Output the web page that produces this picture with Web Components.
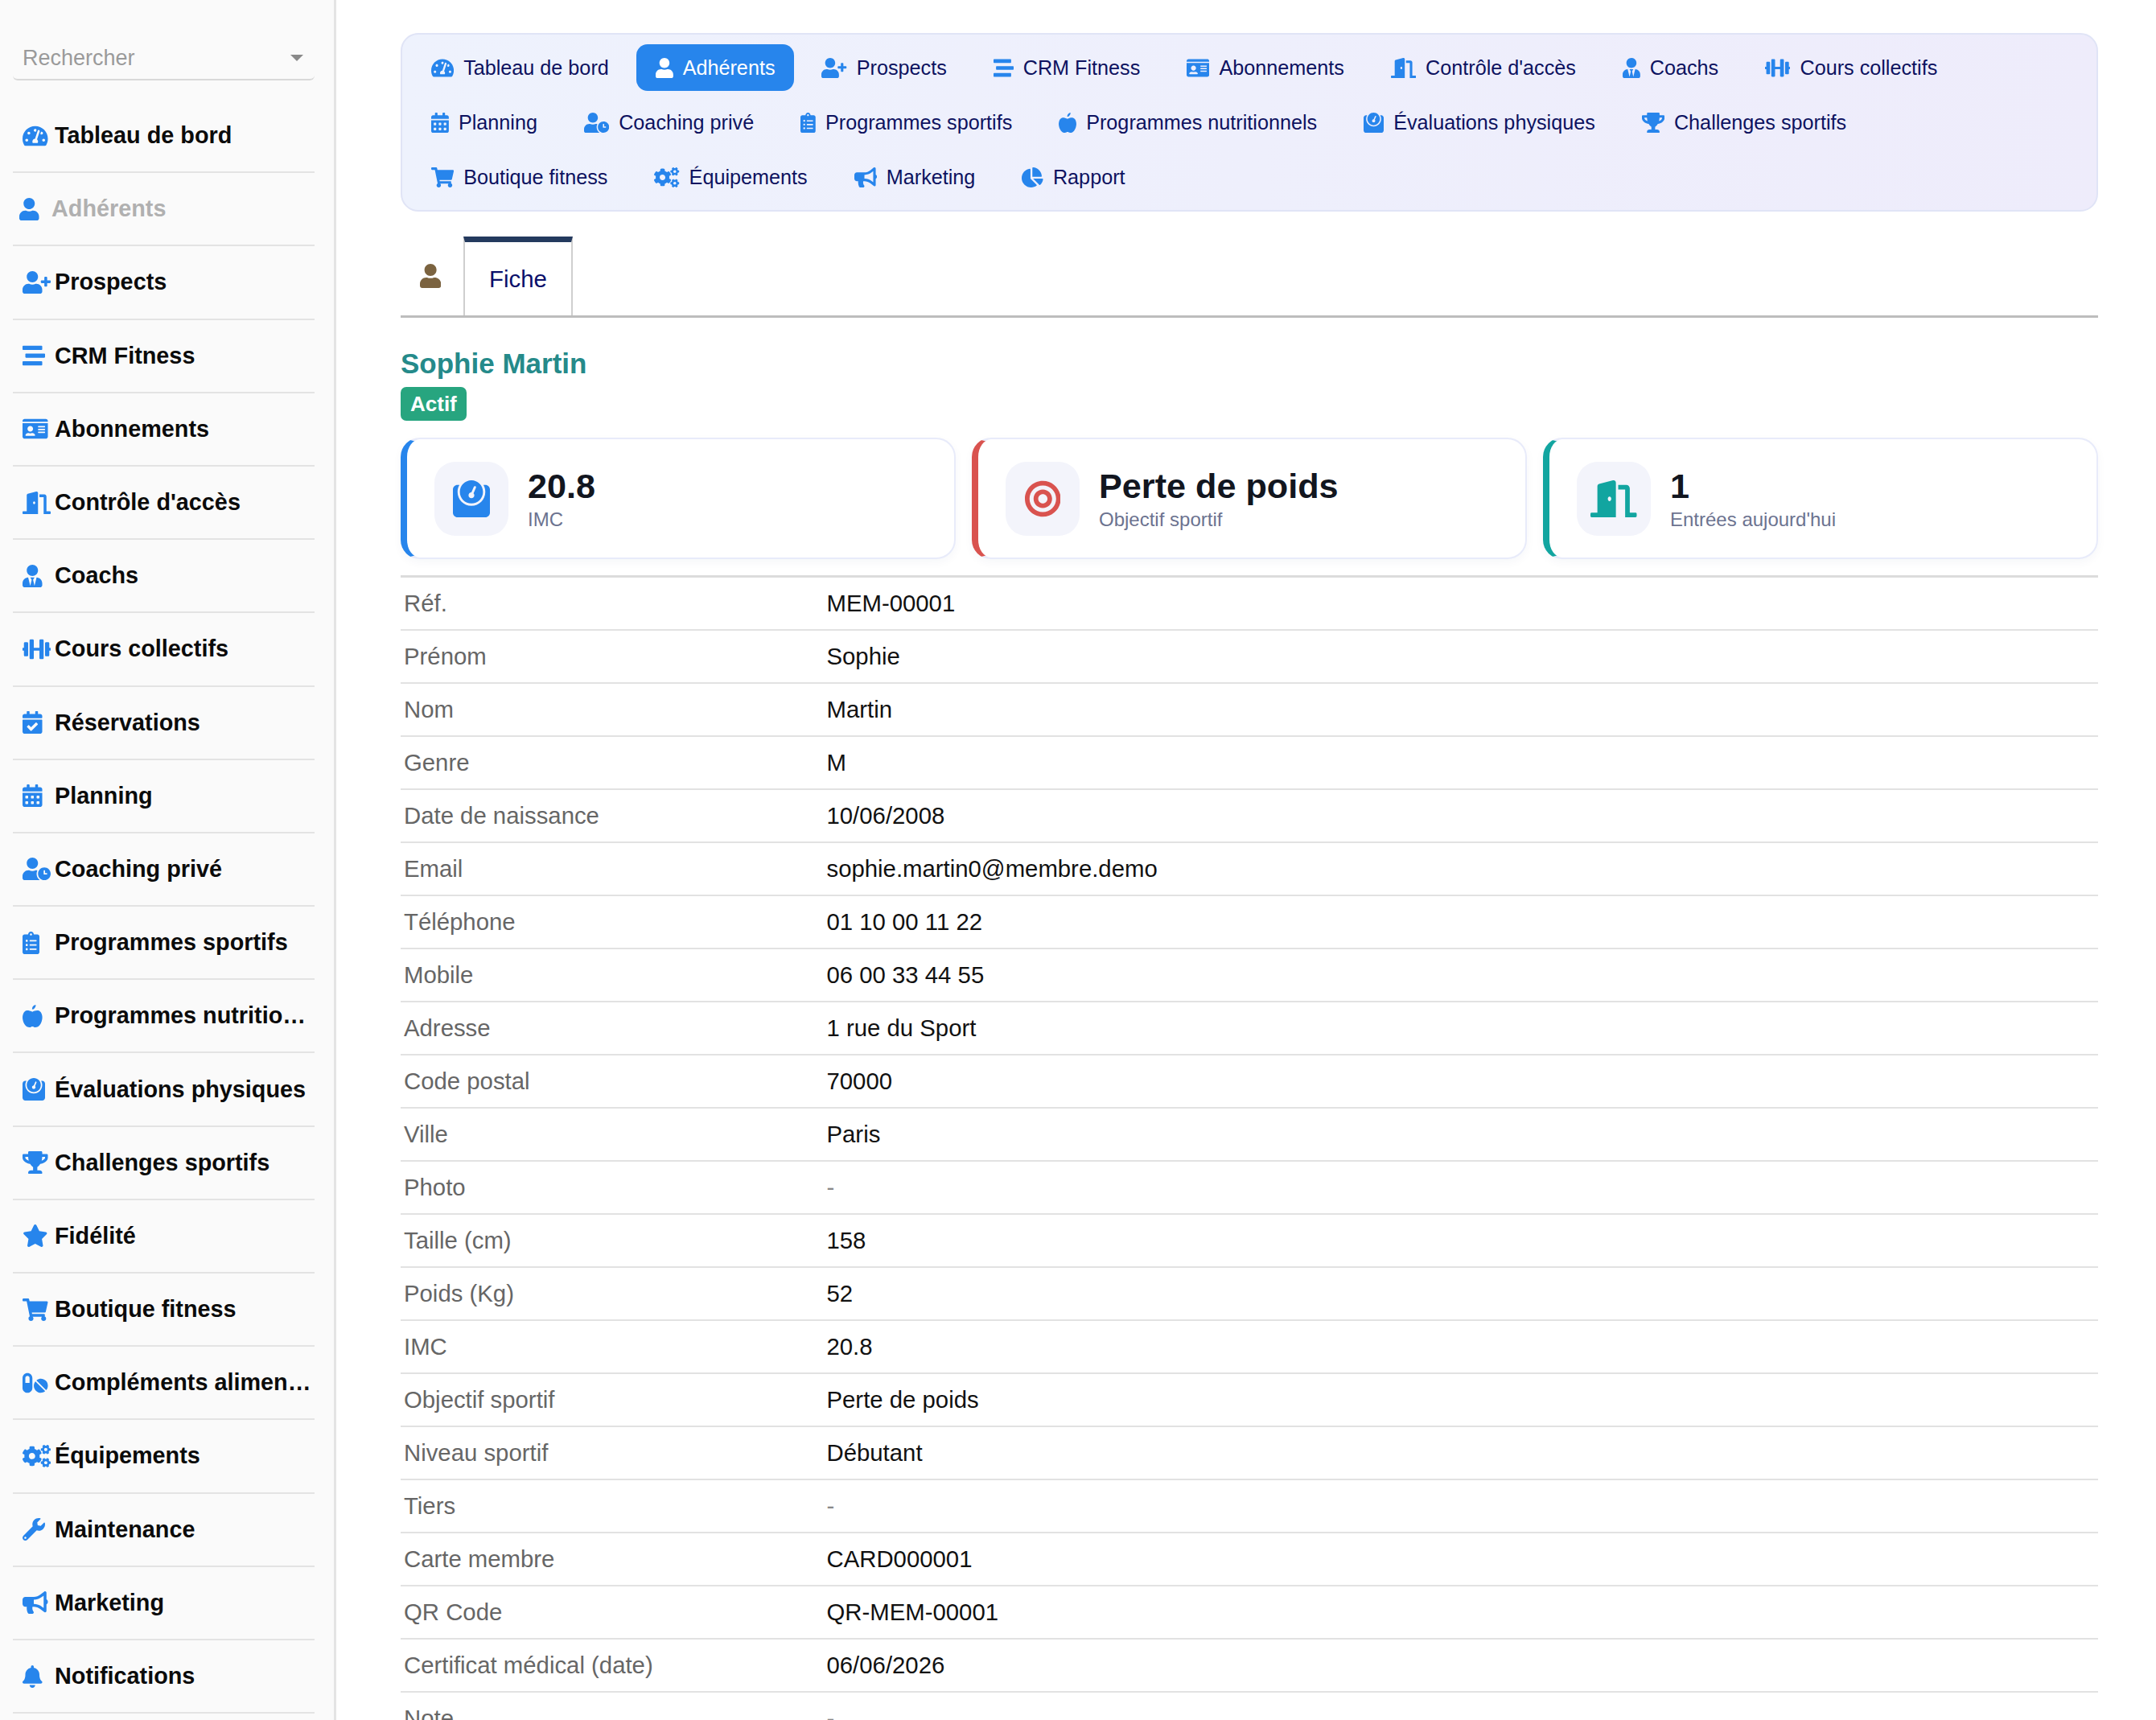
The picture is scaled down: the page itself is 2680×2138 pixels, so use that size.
<!DOCTYPE html>
<html lang="fr">
<head>
<meta charset="utf-8">
<title>Sophie Martin</title>
<style>
	html, body { margin: 0; height: 2138px; overflow: hidden; background: #fff; }
	body { font-family: "Liberation Sans", Arial, sans-serif; display: flex; align-items: flex-start; }
</style>
</head>
<body>
<side-menu>
	<search-select slot="search" placeholder="Rechercher"></search-select>
	<side-item icon="gauge">Tableau de bord</side-item>
	<side-item icon="user" current>Adhérents</side-item>
	<side-item icon="userPlus">Prospects</side-item>
	<side-item icon="stream">CRM Fitness</side-item>
	<side-item icon="idCard">Abonnements</side-item>
	<side-item icon="door">Contrôle d'accès</side-item>
	<side-item icon="userTie">Coachs</side-item>
	<side-item icon="dumbbell">Cours collectifs</side-item>
	<side-item icon="calCheck">Réservations</side-item>
	<side-item icon="calendar">Planning</side-item>
	<side-item icon="userClock">Coaching privé</side-item>
	<side-item icon="clipboard">Programmes sportifs</side-item>
	<side-item icon="apple">Programmes nutritionnels</side-item>
	<side-item icon="weight">Évaluations physiques</side-item>
	<side-item icon="trophy">Challenges sportifs</side-item>
	<side-item icon="star">Fidélité</side-item>
	<side-item icon="cart">Boutique fitness</side-item>
	<side-item icon="pills">Compléments alimentaires</side-item>
	<side-item icon="cogs">Équipements</side-item>
	<side-item icon="wrench">Maintenance</side-item>
	<side-item icon="bullhorn">Marketing</side-item>
	<side-item icon="bell">Notifications</side-item>
</side-menu>

<main-area>
	<nav-panel>
		<nav-pill icon="gauge">Tableau de bord</nav-pill>
		<nav-pill icon="user" active>Adhérents</nav-pill>
		<nav-pill icon="userPlus">Prospects</nav-pill>
		<nav-pill icon="stream">CRM Fitness</nav-pill>
		<nav-pill icon="idCard">Abonnements</nav-pill>
		<nav-pill icon="door">Contrôle d'accès</nav-pill>
		<nav-pill icon="userTie">Coachs</nav-pill>
		<nav-pill icon="dumbbell">Cours collectifs</nav-pill>
		<nav-pill icon="calendar">Planning</nav-pill>
		<nav-pill icon="userClock">Coaching privé</nav-pill>
		<nav-pill icon="clipboard">Programmes sportifs</nav-pill>
		<nav-pill icon="apple">Programmes nutritionnels</nav-pill>
		<nav-pill icon="weight">Évaluations physiques</nav-pill>
		<nav-pill icon="trophy">Challenges sportifs</nav-pill>
		<nav-pill icon="cart">Boutique fitness</nav-pill>
		<nav-pill icon="cogs">Équipements</nav-pill>
		<nav-pill icon="bullhorn">Marketing</nav-pill>
		<nav-pill icon="pie">Rapport</nav-pill>
	</nav-panel>

	<tab-bar label="Fiche"></tab-bar>
	<member-head name="Sophie Martin" status="Actif"></member-head>

	<stat-row>
		<stat-card icon="weight" color="#2785ec" value="20.8">IMC</stat-card>
		<stat-card icon="bullseye" color="#d9534f" value="Perte de poids">Objectif sportif</stat-card>
		<stat-card icon="door" color="#12a5a0" value="1">Entrées aujourd'hui</stat-card>
	</stat-row>

	<detail-table>
		<detail-row label="Réf.">MEM-00001</detail-row>
		<detail-row label="Prénom">Sophie</detail-row>
		<detail-row label="Nom">Martin</detail-row>
		<detail-row label="Genre">M</detail-row>
		<detail-row label="Date de naissance">10/06/2008</detail-row>
		<detail-row label="Email">sophie.martin0@membre.demo</detail-row>
		<detail-row label="Téléphone">01 10 00 11 22</detail-row>
		<detail-row label="Mobile">06 00 33 44 55</detail-row>
		<detail-row label="Adresse">1 rue du Sport</detail-row>
		<detail-row label="Code postal">70000</detail-row>
		<detail-row label="Ville">Paris</detail-row>
		<detail-row label="Photo" empty>-</detail-row>
		<detail-row label="Taille (cm)">158</detail-row>
		<detail-row label="Poids (Kg)">52</detail-row>
		<detail-row label="IMC">20.8</detail-row>
		<detail-row label="Objectif sportif">Perte de poids</detail-row>
		<detail-row label="Niveau sportif">Débutant</detail-row>
		<detail-row label="Tiers" empty>-</detail-row>
		<detail-row label="Carte membre">CARD000001</detail-row>
		<detail-row label="QR Code">QR-MEM-00001</detail-row>
		<detail-row label="Certificat médical (date)">06/06/2026</detail-row>
		<detail-row label="Note" empty>-</detail-row>
	</detail-table>
</main-area>

<script>
// Les icônes : [largeur du viewBox, tracé]
const ICONS = {
	gauge: [576, 'M288 32C128.94 32 0 160.94 0 320c0 52.8 14.25 102.26 39.06 144.8 5.61 9.62 16.3 15.2 27.44 15.2h443c11.14 0 21.83-5.58 27.44-15.2C561.75 422.26 576 372.8 576 320c0-159.06-128.94-288-288-288zm0 64c14.71 0 26.58 10.13 30.32 23.65-1.11 2.26-2.64 4.23-3.45 6.67l-9.22 27.67c-5.13 3.49-10.97 6.01-17.64 6.01-17.67 0-32-14.33-32-32S270.33 96 288 96zM96 384c-17.67 0-32-14.33-32-32s14.33-32 32-32 32 14.33 32 32-14.33 32-32 32zm48-160c-17.67 0-32-14.33-32-32s14.33-32 32-32 32 14.33 32 32-14.33 32-32 32zm246.77-72.41l-61.33 184C343.13 347.33 352 364.54 352 384c0 11.72-3.38 22.55-8.88 32H232.88c-5.5-9.45-8.88-20.28-8.88-32 0-33.94 26.5-61.43 59.9-63.59l61.34-184.01c4.17-12.56 17.73-19.45 30.36-15.17 12.57 4.19 19.35 17.79 15.17 30.36zm14.66 57.2l15.52-46.55c3.47-1.29 7.13-2.23 11.05-2.23 17.67 0 32 14.33 32 32s-14.33 32-32 32c-11.38 0-20.89-6.28-26.57-15.22zM480 384c-17.67 0-32-14.33-32-32s14.33-32 32-32 32 14.33 32 32-14.33 32-32 32z'],
	user: [448, 'M224 256c70.7 0 128-57.3 128-128S294.7 0 224 0 96 57.3 96 128s57.3 128 128 128zm89.6 32h-16.7c-22.2 10.2-46.9 16-72.9 16s-50.6-5.8-72.9-16h-16.7C60.2 288 0 348.2 0 422.4V464c0 26.5 21.5 48 48 48h352c26.5 0 48-21.5 48-48v-41.6c0-74.2-60.2-134.4-134.4-134.4z'],
	userPlus: [640, 'M624 208h-64v-64c0-8.8-7.2-16-16-16h-32c-8.8 0-16 7.2-16 16v64h-64c-8.8 0-16 7.2-16 16v32c0 8.8 7.2 16 16 16h64v64c0 8.8 7.2 16 16 16h32c8.8 0 16-7.2 16-16v-64h64c8.8 0 16-7.2 16-16v-32c0-8.8-7.2-16-16-16zm-400 48c70.7 0 128-57.3 128-128S294.7 0 224 0 96 57.3 96 128s57.3 128 128 128zm89.6 32h-16.7c-22.2 10.2-46.9 16-72.9 16s-50.6-5.8-72.9-16h-16.7C60.2 288 0 348.2 0 422.4V464c0 26.5 21.5 48 48 48h352c26.5 0 48-21.5 48-48v-41.6c0-74.2-60.2-134.4-134.4-134.4z'],
	stream: [512, 'M16 128h416c8.84 0 16-7.16 16-16V48c0-8.84-7.16-16-16-16H16C7.16 32 0 39.16 0 48v64c0 8.84 7.16 16 16 16zm480 80H80c-8.84 0-16 7.16-16 16v64c0 8.84 7.16 16 16 16h416c8.84 0 16-7.16 16-16v-64c0-8.84-7.16-16-16-16zm-64 176H16c-8.84 0-16 7.16-16 16v64c0 8.84 7.16 16 16 16h416c8.84 0 16-7.16 16-16v-64c0-8.84-7.16-16-16-16z'],
	idCard: [576, 'M528 32H48C21.5 32 0 53.5 0 80v16h576V80c0-26.5-21.5-48-48-48zM0 432c0 26.5 21.5 48 48 48h480c26.5 0 48-21.5 48-48V128H0v304zm352-232c0-4.4 3.6-8 8-8h144c4.4 0 8 3.6 8 8v16c0 4.4-3.6 8-8 8H360c-4.4 0-8-3.6-8-8v-16zm0 64c0-4.4 3.6-8 8-8h144c4.4 0 8 3.6 8 8v16c0 4.4-3.6 8-8 8H360c-4.4 0-8-3.6-8-8v-16zm0 64c0-4.4 3.6-8 8-8h144c4.4 0 8 3.6 8 8v16c0 4.4-3.6 8-8 8H360c-4.4 0-8-3.6-8-8v-16zM176 192c35.3 0 64 28.7 64 64s-28.7 64-64 64-64-28.7-64-64 28.7-64 64-64zM67.1 396.2C75.5 370.5 99.6 352 128 352h8.2c12.3 5.1 25.7 8 39.8 8s27.6-2.9 39.8-8h8.2c28.4 0 52.5 18.5 60.9 44.2 3.2 9.9-5.2 19.8-15.6 19.8H82.7c-10.4 0-18.8-10-15.6-19.8z'],
	door: [640, 'M624 448h-80V113.45C544 86.19 522.47 64 496 64H384v64h96v384h144c8.84 0 16-7.16 16-16v-32c0-8.84-7.16-16-16-16zM312.24 1.01l-192 49.74C105.99 54.44 96 67.7 96 82.92V448H16c-8.84 0-16 7.16-16 16v32c0 8.84 7.16 16 16 16h336V33.18c0-21.58-19.56-37.41-39.76-32.17zM264 288c-13.25 0-24-14.33-24-32s10.75-32 24-32 24 14.33 24 32-10.75 32-24 32z'],
	userTie: [448, 'M224 256c70.7 0 128-57.3 128-128S294.7 0 224 0 96 57.3 96 128s57.3 128 128 128zm95.8 32.6L272 480l-32-136 32-56h-96l32 56-32 136-47.8-191.4C56.9 292 0 350.3 0 422.4V464c0 26.5 21.5 48 48 48h352c26.5 0 48-21.5 48-48v-41.6c0-72.1-56.9-130.4-128.2-133.8z'],
	dumbbell: [640, 'M104 96H56c-13.3 0-24 10.7-24 24v104H8c-4.4 0-8 3.6-8 8v48c0 4.4 3.6 8 8 8h24v104c0 13.3 10.7 24 24 24h48c13.3 0 24-10.7 24-24V120c0-13.3-10.7-24-24-24zm528 128h-24V120c0-13.3-10.7-24-24-24h-48c-13.3 0-24 10.7-24 24v272c0 13.3 10.7 24 24 24h48c13.3 0 24-10.7 24-24V288h24c4.4 0 8-3.6 8-8v-48c0-4.4-3.6-8-8-8zM456 32h-48c-13.3 0-24 10.7-24 24v168H256V56c0-13.3-10.7-24-24-24h-48c-13.3 0-24 10.7-24 24v400c0 13.3 10.7 24 24 24h48c13.3 0 24-10.7 24-24V288h128v168c0 13.3 10.7 24 24 24h48c13.3 0 24-10.7 24-24V56c0-13.3-10.7-24-24-24z'],
	calCheck: [448, 'M436 160H12c-6.627 0-12-5.373-12-12v-36c0-26.51 21.49-48 48-48h48V12c0-6.627 5.373-12 12-12h40c6.627 0 12 5.373 12 12v52h128V12c0-6.627 5.373-12 12-12h40c6.627 0 12 5.373 12 12v52h48c26.51 0 48 21.49 48 48v36c0 6.627-5.373 12-12 12zM12 192h424c6.627 0 12 5.373 12 12v260c0 26.51-21.49 48-48 48H48c-26.51 0-48-21.49-48-48V204c0-6.627 5.373-12 12-12zm333.296 95.947l-28.169-28.398c-4.667-4.705-12.265-4.736-16.970-.068L194.12 364.665l-45.98-46.352c-4.667-4.705-12.266-4.736-16.971-.068l-28.397 28.17c-4.705 4.667-4.736 12.265-.068 16.970l82.601 83.269c4.667 4.705 12.265 4.736 16.970.068l142.953-141.805c4.705-4.667 4.736-12.265.068-16.97z'],
	calendar: [448, 'M0 464c0 26.5 21.5 48 48 48h352c26.5 0 48-21.5 48-48V192H0v272zm320-196c0-6.6 5.4-12 12-12h40c6.6 0 12 5.4 12 12v40c0 6.6-5.4 12-12 12h-40c-6.6 0-12-5.4-12-12v-40zm0 128c0-6.6 5.4-12 12-12h40c6.6 0 12 5.4 12 12v40c0 6.6-5.4 12-12 12h-40c-6.6 0-12-5.4-12-12v-40zM192 268c0-6.6 5.4-12 12-12h40c6.6 0 12 5.4 12 12v40c0 6.6-5.4 12-12 12h-40c-6.6 0-12-5.4-12-12v-40zm0 128c0-6.6 5.4-12 12-12h40c6.6 0 12 5.4 12 12v40c0 6.6-5.4 12-12 12h-40c-6.6 0-12-5.4-12-12v-40zM64 268c0-6.6 5.4-12 12-12h40c6.6 0 12 5.4 12 12v40c0 6.6-5.4 12-12 12H76c-6.6 0-12-5.4-12-12v-40zm0 128c0-6.6 5.4-12 12-12h40c6.6 0 12 5.4 12 12v40c0 6.6-5.4 12-12 12H76c-6.6 0-12-5.4-12-12v-40zM400 64h-48V16c0-8.8-7.2-16-16-16h-32c-8.8 0-16 7.2-16 16v48H160V16c0-8.8-7.2-16-16-16h-32c-8.8 0-16 7.2-16 16v48H48C21.5 64 0 85.5 0 112v48h448v-48c0-26.5-21.5-48-48-48z'],
	userClock: [640, 'M496 224c-79.6 0-144 64.4-144 144s64.4 144 144 144 144-64.4 144-144-64.4-144-144-144zm64 150.3c0 5.3-4.4 9.7-9.7 9.7h-60.6c-5.3 0-9.7-4.4-9.7-9.7v-76.6c0-5.3 4.4-9.7 9.7-9.7h12.6c5.3 0 9.7 4.4 9.7 9.7V352h38.3c5.3 0 9.7 4.4 9.7 9.7v12.6zM320 368c0-27.8 6.7-54.1 18.2-77.5-8-1.5-16.2-2.5-24.6-2.5h-16.7c-22.2 10.2-46.9 16-72.9 16s-50.6-5.8-72.9-16h-16.7C60.2 288 0 348.2 0 422.4V464c0 26.5 21.5 48 48 48h347.1c-45.3-31.9-75.1-84.5-75.1-144zm-96-112c70.7 0 128-57.3 128-128S294.7 0 224 0 96 57.3 96 128s57.3 128 128 128z'],
	clipboard: [384, 'M336 64h-80c0-35.3-28.7-64-64-64s-64 28.7-64 64H48C21.5 64 0 85.5 0 112v352c0 26.5 21.5 48 48 48h288c26.5 0 48-21.5 48-48V112c0-26.5-21.5-48-48-48zM96 424c-13.3 0-24-10.7-24-24s10.7-24 24-24 24 10.7 24 24-10.7 24-24 24zm0-96c-13.3 0-24-10.7-24-24s10.7-24 24-24 24 10.7 24 24-10.7 24-24 24zm0-96c-13.3 0-24-10.7-24-24s10.7-24 24-24 24 10.7 24 24-10.7 24-24 24zm96-192c13.3 0 24 10.7 24 24s-10.7 24-24 24-24-10.7-24-24 10.7-24 24-24zm128 368c0 4.4-3.6 8-8 8H168c-4.4 0-8-3.6-8-8v-16c0-4.4 3.6-8 8-8h144c4.4 0 8 3.6 8 8v16zm0-96c0 4.4-3.6 8-8 8H168c-4.4 0-8-3.6-8-8v-16c0-4.4 3.6-8 8-8h144c4.4 0 8 3.6 8 8v16zm0-96c0 4.4-3.6 8-8 8H168c-4.4 0-8-3.6-8-8v-16c0-4.4 3.6-8 8-8h144c4.4 0 8 3.6 8 8v16z'],
	apple: [448, 'M352 129c26 5 47 19 64 42 15 21 25 47 30 78 5 29 4 57-1 86-8 47-24 87-48 119-29 39-65 58-108 58-11 0-22-3-35-10-9-5-18-8-29-8s-20 3-29 8c-13 7-24 10-35 10-43 0-79-19-108-58C29 422 13 382 5 335c-5-29-6-57-1-86 5-31 15-57 30-78 17-23 38-37 64-42 16-3 38 0 66 7 24 7 44 15 61 24 13-8 30-15 50-22 29-9 53-12 71-9zM248 100c-12 2-22 3-30 3-1-30 8-55 26-74 15-15 34-25 56-29 2 30-7 56-24 74-7 8-17 17-28 26z'],
	weight: [512, 'M448 64h-25.98C438.44 92.28 448 125.01 448 160c0 105.87-86.13 192-192 192S64 265.87 64 160c0-34.99 9.56-67.72 25.98-96H64C28.71 64 0 92.71 0 128v320c0 35.29 28.71 64 64 64h384c35.29 0 64-28.71 64-64V128c0-35.29-28.71-64-64-64zM256 320c88.37 0 160-71.63 160-160S344.37 0 256 0 96 71.63 96 160s71.63 160 160 160zm-.3-151.94l33.58-78.36c3.5-8.17 12.94-11.92 21.03-8.41 8.12 3.48 11.88 12.89 8.41 21l-33.67 78.55C291.73 188 296 197.45 296 208c0 22.09-17.91 40-40 40s-40-17.91-40-40c0-21.98 17.76-39.77 39.7-39.94z'],
	trophy: [576, 'M552 64H448V24c0-13.3-10.7-24-24-24H152c-13.3 0-24 10.7-24 24v40H24C10.7 64 0 74.7 0 88v56c0 35.7 22.5 72.4 61.9 100.7 31.5 22.7 69.8 37.1 110 41.7C203.3 338.5 240 360 240 360v72h-48c-35.3 0-64 20.7-64 56v12c0 6.6 5.4 12 12 12h296c6.6 0 12-5.4 12-12v-12c0-35.3-28.7-56-64-56h-48v-72s36.7-21.5 68.1-73.6c40.3-4.6 78.6-19 110-41.7 39.3-28.3 61.9-65 61.9-100.7V88c0-13.3-10.7-24-24-24zM99.3 192.8C74.9 175.2 64 155.6 64 144v-16h64.2c1 32.6 5.8 61.2 12.8 86.2-15.1-5.2-29.2-12.4-41.7-21.4zM512 144c0 16.1-17.7 36.1-35.3 48.8-12.5 9-26.7 16.2-41.8 21.4 7-25 11.8-53.6 12.8-86.2H512v16z'],
	star: [576, 'M259.3 17.8L194 150.2 47.9 171.5c-26.2 3.8-36.7 36.1-17.7 54.6l105.7 103-25 145.5c-4.5 26.3 23.2 46 46.4 33.7L288 439.6l130.7 68.7c23.2 12.2 50.9-7.4 46.4-33.7l-25-145.5 105.7-103c19-18.5 8.5-50.8-17.7-54.6L382 150.2 316.7 17.8c-11.7-23.6-45.6-23.9-57.4 0z'],
	cart: [576, 'M528.12 301.319l47.273-208C578.806 78.301 567.391 64 551.99 64H159.208l-9.166-44.81C147.758 8.021 137.93 0 126.529 0H24C10.745 0 0 10.745 0 24v16c0 13.255 10.745 24 24 24h69.883l70.248 343.435C147.325 417.1 136 435.222 136 456c0 30.928 25.072 56 56 56s56-25.072 56-56c0-15.674-6.447-29.835-16.824-40h209.647C430.447 426.165 424 440.326 424 456c0 30.928 25.072 56 56 56s56-25.072 56-56c0-22.172-12.888-41.332-31.579-50.405l5.517-24.276c3.413-15.018-8.002-29.319-23.403-29.319H218.117l-6.545-32h293.145c11.206 0 20.92-7.754 23.403-18.681z'],
	pills: [576, 'M112 32C50.1 32 0 82.1 0 144v224c0 61.9 50.1 112 112 112s112-50.1 112-112V144c0-61.9-50.1-112-112-112zm48 224H64V144c0-26.5 21.5-48 48-48s48 21.5 48 48v112zm139.7-29.7c-3.5-3.5-9.4-3.2-12.3.8-45.3 62.5-40.4 150.1 15.9 206.4 56.3 56.3 143.9 61.2 206.4 15.9 4-2.9 4.3-8.8.8-12.3L299.7 226.3zm229.8-19c-56.3-56.3-143.9-61.2-206.4-15.9-4 2.9-4.3 8.8-.8 12.3l210.8 210.8c3.5 3.5 9.4 3.2 12.3-.8 45.3-62.6 40.5-150.1-15.9-206.4z'],
	cogs: [640, 'M512.1 191l-8.2 14.3c-3 5.3-9.4 7.5-15.1 5.4-11.8-4.4-22.6-10.7-32.1-18.6-4.6-3.8-5.8-10.5-2.8-15.7l8.2-14.3c-6.9-8-12.3-17.3-15.9-27.4h-16.5c-6 0-11.2-4.3-12.2-10.3-2-12-2.1-24.6 0-37.1 1-6 6.2-10.4 12.2-10.4h16.5c3.6-10.1 9-19.4 15.9-27.4l-8.2-14.3c-3-5.2-1.9-11.9 2.8-15.7 9.5-7.9 20.4-14.2 32.1-18.6 5.7-2.1 12.1.1 15.1 5.4l8.2 14.3c10.5-1.9 21.2-1.9 31.7 0L552 6.3c3-5.3 9.4-7.5 15.1-5.4 11.8 4.4 22.6 10.7 32.1 18.6 4.6 3.8 5.8 10.5 2.8 15.7l-8.2 14.3c6.9 8 12.3 17.3 15.9 27.4h16.5c6 0 11.2 4.3 12.2 10.3 2 12 2.1 24.6 0 37.1-1 6-6.2 10.4-12.2 10.4h-16.5c-3.6 10.1-9 19.4-15.9 27.4l8.2 14.3c3 5.2 1.9 11.9-2.8 15.7-9.5 7.9-20.4 14.2-32.1 18.6-5.7 2.1-12.1-.1-15.1-5.4l-8.2-14.3c-10.4 1.9-21.2 1.9-31.7 0zm-10.5-58.8c38.5 29.6 82.4-14.3 52.8-52.8-38.5-29.7-82.4 14.3-52.8 52.8zM386.3 286.1l33.7 16.8c10.1 5.8 14.5 18.1 10.5 29.1-8.9 24.2-26.4 46.4-42.6 65.8-7.4 8.9-20.2 11.1-30.3 5.3l-29.1-16.8c-16 13.7-34.6 24.6-54.9 31.7v33.6c0 11.6-8.3 21.6-19.7 23.6-24.6 4.2-50.4 4.4-75.9 0-11.5-2-20-11.9-20-23.6V418c-20.3-7.2-38.9-18-54.9-31.7L74 403c-10 5.8-22.9 3.6-30.3-5.3-16.2-19.4-33.3-41.6-42.2-65.7-4-10.9.4-23.2 10.5-29.1l33.3-16.8c-3.9-20.9-3.9-42.4 0-63.4L12 205.8c-10.1-5.8-14.6-18.1-10.5-29 8.9-24.2 26-46.4 42.2-65.8 7.4-8.9 20.2-11.1 30.3-5.3l29.1 16.8c16-13.7 34.6-24.6 54.9-31.7V57.1c0-11.5 8.2-21.5 19.6-23.5 24.6-4.2 50.5-4.4 76-.1 11.5 2 20 11.9 20 23.6v33.6c20.3 7.2 38.9 18 54.9 31.7l29.1-16.8c10-5.8 22.9-3.6 30.3 5.3 16.2 19.4 33.2 41.6 42.1 65.8 4 10.9.1 23.2-10 29.1l-33.7 16.8c3.9 21 3.9 42.5 0 63.5zm-117.6 21.1c59.2-77-28.7-164.9-105.7-105.7-59.2 77 28.7 164.9 105.7 105.7zm243.4 182.7l-8.2 14.3c-3 5.3-9.4 7.5-15.1 5.4-11.8-4.4-22.6-10.7-32.1-18.6-4.6-3.8-5.8-10.5-2.8-15.7l8.2-14.3c-6.9-8-12.3-17.3-15.9-27.4h-16.5c-6 0-11.2-4.3-12.2-10.3-2-12-2.1-24.6 0-37.1 1-6 6.2-10.4 12.2-10.4h16.5c3.6-10.1 9-19.4 15.9-27.4l-8.2-14.3c-3-5.2-1.9-11.9 2.8-15.7 9.5-7.9 20.4-14.2 32.1-18.6 5.7-2.1 12.1.1 15.1 5.4l8.2 14.3c10.5-1.9 21.2-1.9 31.7 0l8.2-14.3c3-5.3 9.4-7.5 15.1-5.4 11.8 4.4 22.6 10.7 32.1 18.6 4.6 3.8 5.8 10.5 2.8 15.7l-8.2 14.3c6.9 8 12.3 17.3 15.9 27.4h16.5c6 0 11.2 4.3 12.2 10.3 2 12 2.1 24.6 0 37.1-1 6-6.2 10.4-12.2 10.4h-16.5c-3.6 10.1-9 19.4-15.9 27.4l8.2 14.3c3 5.2 1.9 11.9-2.8 15.7-9.5 7.9-20.4 14.2-32.1 18.6-5.7 2.1-12.1-.1-15.1-5.4l-8.2-14.3c-10.4 1.9-21.2 1.9-31.7 0zM501.6 431c38.5 29.6 82.4-14.3 52.8-52.8-38.5-29.6-82.4 14.3-52.8 52.8z'],
	wrench: [512, 'M507.73 109.1c-2.24-9.03-13.54-12.09-20.12-5.51l-74.36 74.36-67.88-11.31-11.31-67.88 74.36-74.36c6.62-6.62 3.43-17.9-5.66-20.16-47.38-11.74-99.55.91-136.58 37.93-39.64 39.64-50.55 97.1-34.05 147.2L18.74 402.76c-24.99 24.99-24.99 65.51 0 90.5 24.99 24.99 65.51 24.99 90.5 0l213.21-213.21c50.12 16.71 107.47 5.68 147.37-34.22 37.07-37.07 49.7-89.32 37.91-136.73zM64 472c-13.25 0-24-10.75-24-24 0-13.26 10.75-24 24-24s24 10.74 24 24c0 13.25-10.75 24-24 24z'],
	bullhorn: [576, 'M576 240c0-23.63-12.95-44.04-32-55.12V32.01C544 23.26 537.02 0 512 0c-7.12 0-14.19 2.38-19.98 7.02l-85.03 68.03C364.28 109.19 310.66 128 256 128H64c-35.35 0-64 28.65-64 64v96c0 35.35 28.65 64 64 64h33.7c-1.39 10.48-2.18 21.14-2.18 32 0 39.77 9.26 77.35 25.56 110.94 5.19 10.69 16.52 17.06 28.4 17.06h74.28c26.05 0 41.69-29.84 25.9-50.56-16.4-21.52-26.15-48.36-26.15-77.44 0-11.11 1.62-21.79 4.41-32H256c54.66 0 108.28 18.81 150.98 52.95l85.03 68.03a32.023 32.023 0 0 0 19.98 7.02c24.92 0 32-22.78 32-32V295.13C563.05 284.04 576 263.63 576 240zm-96 141.42l-33.05-26.44C392.95 311.78 325.12 288 256 288v-96c69.12 0 136.95-23.78 190.95-66.98L480 98.58v282.84z'],
	bell: [448, 'M224 512c35.32 0 63.97-28.65 63.97-64H160.03c0 35.35 28.65 64 63.97 64zm215.39-149.71c-19.32-20.76-55.47-51.99-55.47-154.29 0-77.7-54.48-139.9-127.94-155.16V32c0-17.67-14.32-32-31.98-32s-31.98 14.33-31.98 32v20.84C118.56 68.1 64.08 130.3 64.08 208c0 102.3-36.15 133.53-55.47 154.29-6 6.45-8.66 14.16-8.61 21.71.11 16.4 12.98 32 32.1 32h383.8c19.12 0 32-15.6 32.1-32 .05-7.55-2.61-15.27-8.61-21.71z'],
	pie: [544, 'M527.79 288H290.5l158.03 158.03c6.04 6.04 15.98 6.53 22.19.68 38.7-36.46 65.32-85.61 73.13-140.86 1.34-9.46-6.51-17.85-16.06-17.85zm-15.83-64.8C503.72 103.74 408.26 8.28 288.8.04 279.68-.59 272 7.1 272 16.24V240h223.77c9.14 0 16.82-7.68 16.19-16.8zM224 288V50.71c0-9.55-8.39-17.4-17.84-16.06C86.99 51.49-4.1 155.6.14 280.37 4.5 408.51 114.83 513.59 243.03 511.98c50.4-.63 96.97-16.87 135.26-44.03 7.9-5.6 8.42-17.23 1.57-24.08L224 288z'],
	bullseye: [496, 'M248 8C111.03 8 0 119.03 0 256s111.03 248 248 248 248-111.03 248-248S384.97 8 248 8zm0 432c-101.69 0-184-82.29-184-184 0-101.69 82.29-184 184-184 101.69 0 184 82.29 184 184 0 101.69-82.29 184-184 184zm0-312c-70.69 0-128 57.31-128 128s57.31 128 128 128 128-57.31 128-128-57.31-128-128-128zm0 192c-35.29 0-64-28.71-64-64s28.71-64 64-64 64 28.71 64 64-28.71 64-64 64z'],
};

class AppIcon extends HTMLElement {
	connectedCallback() {
		if (this.shadowRoot) return;
		this.attachShadow({ mode: 'open' });
		let [w, d] = ICONS[this.getAttribute('name')];
		this.shadowRoot.innerHTML = `
			<style>
				:host { display: inline-block; height: 1em; line-height: 0; flex: none; }
				svg { height: 1em; width: auto; display: block; fill: currentColor; }
			</style>
			<svg viewBox="0 0 ${w} 512"><path d="${d}"/></svg>`;
	}
}
customElements.define('app-icon', AppIcon);

class SideMenu extends HTMLElement {
	constructor() {
		super();
		this.attachShadow({ mode: 'open' });
		this.shadowRoot.innerHTML = `
			<style>
				:host {
					display: block; box-sizing: border-box; flex: none;
					width: 418px; height: 2138px; overflow: hidden;
					padding: 0 24px 0 16px;
					background: #fafafa; border-right: 3px solid #e4e4e4;
				}
				nav { display: flex; flex-direction: column; }
			</style>
			<slot name="search"></slot>
			<nav><slot></slot></nav>`;
	}
}
customElements.define('side-menu', SideMenu);

class SearchSelect extends HTMLElement {
	constructor() {
		super();
		this.attachShadow({ mode: 'open' });
	}
	connectedCallback() {
		this.shadowRoot.innerHTML = `
			<style>
				:host {
					display: flex; align-items: center; justify-content: space-between;
					box-sizing: border-box; height: 100px; margin-bottom: 24px;
					padding: 46px 14px 0 12px;
					border-bottom: 2px solid #d9d9d9; border-radius: 0 0 6px 6px;
					font-size: 27px; color: #9a9a9a;
				}
				i { width: 0; height: 0; border: 8px solid transparent; border-top-color: #8a8a8a; border-bottom: 0; }
			</style>
			<span>${this.getAttribute('placeholder')}</span><i></i>`;
	}
}
customElements.define('search-select', SearchSelect);

class SideItem extends HTMLElement {
	constructor() {
		super();
		this.attachShadow({ mode: 'open' });
	}
	connectedCallback() {
		let icon = this.getAttribute('icon');
		this.shadowRoot.innerHTML = `
			<style>
				:host {
					display: flex; align-items: center; box-sizing: border-box;
					height: 91.2px; padding-left: 12px;
					border-bottom: 2px solid #e3e3e3;
					font-size: 28.8px; font-weight: 700; color: #0b0b0b;
				}
				:host([current]) { color: #b0b0b0; padding-left: 8px; }
				app-icon { color: #2785ec; font-size: 28px; }
				.ico { width: 40px; flex: none; display: flex; }
				.txt { white-space: nowrap; overflow: hidden; text-overflow: ellipsis; }
			</style>
			<span class="ico"><app-icon name="${icon}"></app-icon></span>
			<span class="txt"><slot></slot></span>`;
	}
}
customElements.define('side-item', SideItem);

class MainArea extends HTMLElement {
	constructor() {
		super();
		this.attachShadow({ mode: 'open' });
		this.shadowRoot.innerHTML = `
			<style>
				:host {
					display: block; box-sizing: border-box; flex: 1; min-width: 0;
					height: 2138px; overflow: hidden;
					padding: 41px 72px 0 80px;
				}
			</style>
			<slot></slot>`;
	}
}
customElements.define('main-area', MainArea);

class NavPanel extends HTMLElement {
	constructor() {
		super();
		this.attachShadow({ mode: 'open' });
		this.shadowRoot.innerHTML = `
			<style>
				:host {
					display: flex; flex-wrap: wrap; gap: 10px; box-sizing: border-box;
					padding: 12px; border: 2px solid #e0e4f6; border-radius: 22px;
					background: linear-gradient(90deg, #eef2fd, #eeecfb);
				}
			</style>
			<slot></slot>`;
	}
}
customElements.define('nav-panel', NavPanel);

class NavPill extends HTMLElement {
	constructor() {
		super();
		this.attachShadow({ mode: 'open' });
	}
	connectedCallback() {
		this.shadowRoot.innerHTML = `
			<style>
				:host {
					display: inline-flex; align-items: center; gap: 12px; box-sizing: border-box;
					height: 58px; padding: 0 24px; border-radius: 14px;
					font-size: 25.2px; color: #0d1260; white-space: nowrap;
				}
				:host([active]) { background: #2785ec; color: #fff; }
				app-icon { color: #2785ec; font-size: 25px; }
				:host([active]) app-icon { color: #fff; }
			</style>
			<app-icon name="${this.getAttribute('icon')}"></app-icon><slot></slot>`;
	}
}
customElements.define('nav-pill', NavPill);

class TabBar extends HTMLElement {
	constructor() {
		super();
		this.attachShadow({ mode: 'open' });
	}
	connectedCallback() {
		this.shadowRoot.innerHTML = `
			<style>
				:host {
					display: flex; align-items: stretch; box-sizing: border-box;
					height: 101px; margin-top: 31px;
					border-bottom: 3px solid #bdbdbd;
				}
				.pic { width: 78px; display: flex; align-items: center; justify-content: center; font-size: 30px; color: #7b6340; padding-right: 4px; box-sizing: border-box; }
				.tab {
					display: flex; align-items: center; box-sizing: border-box;
					padding: 0 30px; border: 2px solid #cfcfcf; border-top: 7px solid #243a5e; border-bottom: 0;
					font-size: 29.4px; color: #0a0f6a;
				}
			</style>
			<div class="pic"><app-icon name="user"></app-icon></div>
			<div class="tab">${this.getAttribute('label')}</div>`;
	}
}
customElements.define('tab-bar', TabBar);

class MemberHead extends HTMLElement {
	constructor() {
		super();
		this.attachShadow({ mode: 'open' });
	}
	connectedCallback() {
		this.shadowRoot.innerHTML = `
			<style>
				:host { display: block; margin-top: 36px; }
				h2 { margin: 0; font-size: 35px; line-height: 42px; font-weight: 700; color: #258a8a; }
				b {
					display: inline-block; margin-top: 8px; padding: 0 12px; height: 42px; line-height: 42px;
					background: #27a57f; color: #fff; border-radius: 7px; font-size: 26px;
				}
			</style>
			<h2>${this.getAttribute('name')}</h2>
			<b>${this.getAttribute('status')}</b>`;
	}
}
customElements.define('member-head', MemberHead);

class StatRow extends HTMLElement {
	constructor() {
		super();
		this.attachShadow({ mode: 'open' });
		this.shadowRoot.innerHTML = `
			<style>
				:host { display: grid; grid-template-columns: repeat(3, 1fr); gap: 20px; margin-top: 21px; }
			</style>
			<slot></slot>`;
	}
}
customElements.define('stat-row', StatRow);

class StatCard extends HTMLElement {
	constructor() {
		super();
		this.attachShadow({ mode: 'open' });
	}
	connectedCallback() {
		let color = this.getAttribute('color');
		this.shadowRoot.innerHTML = `
			<style>
				:host {
					display: flex; align-items: center; gap: 24px; box-sizing: border-box;
					height: 151px; padding: 0 32px 0 34px; background: #fff;
					border: 2px solid #e8ebfa; border-left: 8px solid ${color}; border-radius: 24px;
					box-shadow: 0 4px 12px rgba(30, 40, 90, .04);
				}
				.box {
					width: 92px; height: 92px; flex: none; display: flex; align-items: center; justify-content: center;
					background: #f3f4fb; border-radius: 26px; color: ${color}; font-size: 46px;
				}
				.val { font-size: 43.2px; line-height: 50px; font-weight: 700; color: #12161f; }
				.sub { font-size: 24px; line-height: 30px; color: #6c7390; margin-top: 2px; }
			</style>
			<div class="box"><app-icon name="${this.getAttribute('icon')}"></app-icon></div>
			<div>
				<div class="val">${this.getAttribute('value')}</div>
				<div class="sub"><slot></slot></div>
			</div>`;
	}
}
customElements.define('stat-card', StatCard);

class DetailTable extends HTMLElement {
	constructor() {
		super();
		this.attachShadow({ mode: 'open' });
		this.shadowRoot.innerHTML = `
			<style>
				:host { display: block; margin-top: 20px; border-top: 3px solid #dcdcdc; }
			</style>
			<slot></slot>`;
	}
}
customElements.define('detail-table', DetailTable);

class DetailRow extends HTMLElement {
	constructor() {
		super();
		this.attachShadow({ mode: 'open' });
	}
	connectedCallback() {
		this.shadowRoot.innerHTML = `
			<style>
				:host {
					display: grid; grid-template-columns: 25% 1fr; align-items: center;
					box-sizing: border-box; height: 66px; padding: 0 4px;
					border-bottom: 2px solid #e2e2e2; font-size: 29.33px; color: #111;
				}
				:host([empty]) .v { color: #888; }
				.l { color: #666; }
				.v { padding-left: 0; }
			</style>
			<div class="l">${this.getAttribute('label')}</div>
			<div class="v"><slot></slot></div>`;
	}
}
customElements.define('detail-row', DetailRow);
</script>
</body>
</html>
